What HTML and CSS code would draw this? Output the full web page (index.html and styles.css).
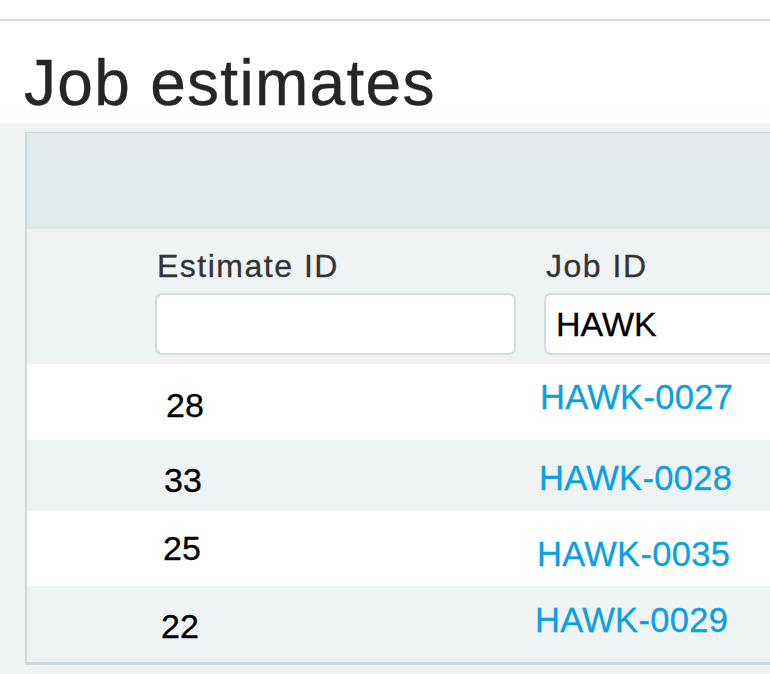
FILE: index.html
```html
<!DOCTYPE html>
<html lang="en">
<head>
    <meta charset="UTF-8">
    <meta name="viewport" content="width=device-width, initial-scale=1.0">
    <title>Job estimates</title>
    <link rel="stylesheet" href="styles.css">
</head>

<body>
<div class="topbar"></div>

<header class="page-head">
    <h1>Job estimates</h1>
</header>

<main class="content">
    <div class="panel">
        <div class="panel-bar"></div>

        <div class="filters">
            <div class="filter">
                <label for="estimateId">Estimate ID</label>
                <input type="text" id="estimateId">
            </div>
            <div class="filter filter-wide">
                <label for="jobId">Job ID</label>
                <input type="text" id="jobId" value="HAWK">
            </div>
        </div>

        <div class="rows">
            <div class="row">
                <span class="num">28</span>
                <a class="job" href="#">HAWK-0027</a>
            </div>
            <div class="row">
                <span class="num">33</span>
                <a class="job" href="#">HAWK-0028</a>
            </div>
            <div class="row">
                <span class="num">25</span>
                <a class="job" href="#">HAWK-0035</a>
            </div>
            <div class="row">
                <span class="num">22</span>
                <a class="job" href="#">HAWK-0029</a>
            </div>
        </div>
    </div>
</main>
</body>
</html>
```

FILE: styles.css
```css
body {
    margin: 0;
    background: white;
    font-family: "Liberation Sans", Arial, sans-serif;
    overflow: hidden;
}

.topbar {
    height: 19px;
    border-bottom: 2px solid #d0d9dd;
}

.page-head {
    padding: 30px 24px 8px;
}

.page-head h1 {
    margin: 0;
    font-size: 64px;
    line-height: 64px;
    font-weight: normal;
    letter-spacing: 1.3px;
    color: #262626;
    -webkit-text-stroke: 0.4px #262626;
}

.content {
    background: #f0f3f4;
    padding: 9px 0 9px 25px;
}

.panel {
    width: 1000px;
    background: #f0f3f4;
    border: 2px solid #cfd8dc;
    border-top-width: 1px;
    border-bottom-width: 3px;
    border-right: none;
}

.panel-bar {
    height: 96px;
    background: #e2e9eb;
}

.filters {
    display: flex;
    gap: 28px;
    padding: 21px 0 9px 128px;
}

.filter label {
    display: block;
    font-size: 32px;
    line-height: 32px;
    letter-spacing: 1.5px;
    color: #333;
    padding-left: 2px;
    margin-bottom: 11px;
    -webkit-text-stroke: 0.3px #333;
}

.filter input {
    box-sizing: border-box;
    width: 361px;
    height: 62px;
    padding: 0 10px;
    border: 2px solid #d3dbdf;
    border-radius: 7px;
    background: white;
    font-family: "Liberation Sans", Arial, sans-serif;
    font-size: 34px;
    color: black;
    -webkit-text-stroke: 0.3px black;
}

.filter-wide input {
    width: 420px;
}

.row {
    display: flex;
    align-items: flex-start;
    font-size: 34px;
    line-height: 34px;
    background: white;
}

.row:nth-child(even) {
    background: #f0f3f4;
}

.num {
    box-sizing: border-box;
    width: 513px;
    padding-left: 139px;
    color: black;
    -webkit-text-stroke: 0.3px black;
}

.job {
    font-size: 34.5px;
    color: #0aa0e4;
    text-decoration: none;
    letter-spacing: 0.3px;
    -webkit-text-stroke: 0.3px #0aa0e4;
}

/* rows sit a little uneven in the original */
.row:nth-child(1) { height: 76px; }
.row:nth-child(1) .num { padding-top: 24px; }
.row:nth-child(1) .job { margin-top: 16px; }

.row:nth-child(2) { height: 71px; }
.row:nth-child(2) .num { width: 512px; padding: 23px 0 0 137px; }
.row:nth-child(2) .job { margin-top: 21px; }

.row:nth-child(3) { height: 75px; }
.row:nth-child(3) .num { width: 510px; padding: 20px 0 0 136px; }
.row:nth-child(3) .job { margin-top: 26px; }

.row:nth-child(4) { height: 76px; }
.row:nth-child(4) .num { width: 508px; padding: 23px 0 0 134px; }
.row:nth-child(4) .job { margin-top: 17px; }
```
